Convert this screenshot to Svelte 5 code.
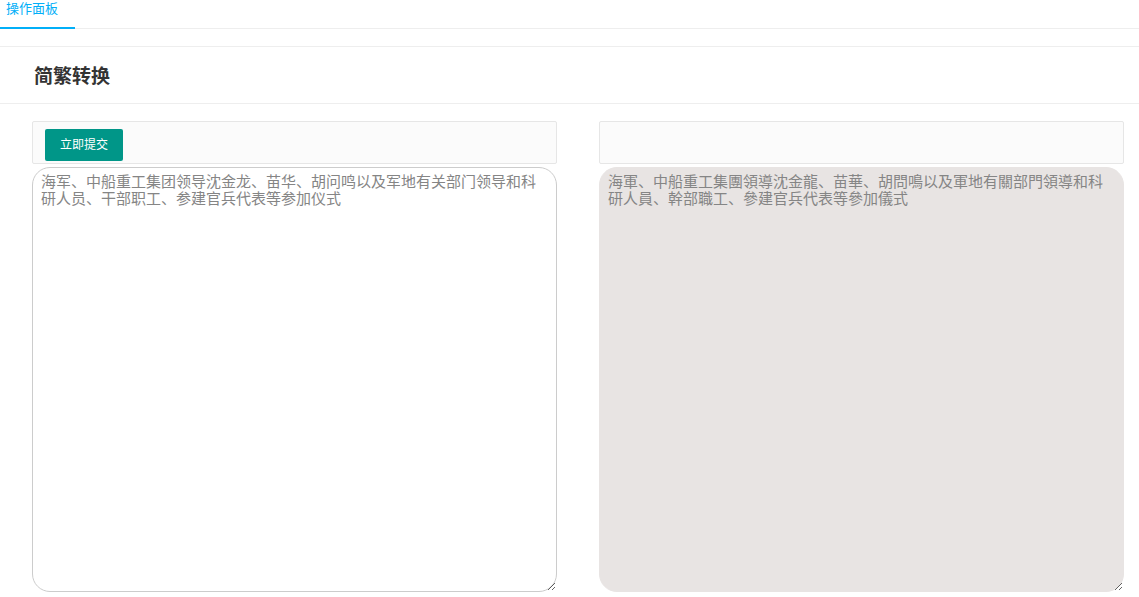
<script>
  let source = $state(
    "海军、中船重工集团领导沈金龙、苗华、胡问鸣以及军地有关部门领导和科研人员、干部职工、参建官兵代表等参加仪式"
  );
  let result = $state(
    "海軍、中船重工集團領導沈金龍、苗華、胡問鳴以及軍地有關部門領導和科研人員、幹部職工、參建官兵代表等參加儀式"
  );

  // characters that differ between the two scripts
  const simplified = "军团领导龙华问鸣关门员干职参仪";
  const traditional = "軍團領導龍華問鳴關門員幹職參儀";

  function submit(event) {
    event.preventDefault();
    result = [...source]
      .map((c) => {
        const i = simplified.indexOf(c);
        return i < 0 ? c : traditional[i];
      })
      .join("");
  }
</script>

<nav class="tabs">
  <a class="tab" href="#panel">操作面板</a>
</nav>

<main id="panel">
  <header>
    <h1>简繁转换</h1>
  </header>

  <form class="columns" onsubmit={submit}>
    <div class="column">
      <div class="toolbar">
        <button type="submit">立即提交</button>
      </div>
      <textarea aria-label="简体" bind:value={source}></textarea>
    </div>
    <div class="column">
      <div class="toolbar"></div>
      <textarea class="result" aria-label="繁體" readonly value={result}
      ></textarea>
    </div>
  </form>
</main>

<style>
  :global(body) {
    background: #fff;
    font-family: "Liberation Sans", "Noto Sans CJK SC", sans-serif;
  }
  .tabs {
    display: flex;
    height: 28px;
    border-bottom: 1px solid #eee;
  }
  .tab {
    box-sizing: border-box;
    width: 75px;
    height: 29px;
    padding-left: 6px;
    border-bottom: 2px solid #01aff8;
    color: #01aff8;
    font-size: 13px;
    line-height: 18px;
    text-decoration: none;
  }
  header {
    margin-top: 17px;
    padding: 0 34px;
    border-top: 1px solid #eee;
    border-bottom: 1px solid #eee;
  }
  h1 {
    margin: 0;
    color: #333;
    font-family: STXingkai, KaiTi, "Noto Sans CJK SC", cursive;
    font-size: 19px;
    font-weight: 700;
    line-height: 56px;
  }
  .columns {
    display: grid;
    grid-template-columns: 1fr 1fr;
    gap: 42px;
    padding: 17px 15px 5px 32px;
  }
  .column {
    display: flex;
    flex-direction: column;
    gap: 3px;
  }
  .toolbar {
    box-sizing: border-box;
    height: 43px;
    padding: 7px 12px;
    border: 1px solid #e6e6e6;
    border-radius: 2px;
    background: #fbfbfb;
  }
  button {
    display: block;
    height: 32px;
    padding: 0 15px;
    border: none;
    border-radius: 2px;
    background: #009688;
    color: #fff;
    font-family: inherit;
    font-size: 12px;
    line-height: 32px;
    cursor: pointer;
  }
  textarea {
    display: block;
    box-sizing: border-box;
    width: 100%;
    height: 425px;
    padding: 4px 8px;
    border: 1px solid #ccc;
    border-radius: 18px;
    outline: none;
    background: #fff;
    color: #858585;
    font-family: "Noto Sans CJK SC", sans-serif;
    font-size: 15px;
    line-height: 17px;
    resize: both;
  }
  .result {
    border-color: #e8e4e3;
    background: #e8e4e3;
  }
</style>
